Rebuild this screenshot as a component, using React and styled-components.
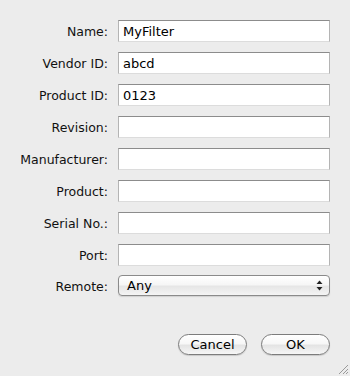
import React from "react";
import styled, { createGlobalStyle } from "styled-components";

const Global = createGlobalStyle`
  html, body { margin: 0; padding: 0; }
  body {
    background: #ececec;
    font-family: "Lucida Grande", "DejaVu Sans", sans-serif;
    font-size: 13px;
    color: #000;
  }
`;

const Window = styled.div`
  position: relative;
  width: 350px;
  height: 376px;
  box-sizing: border-box;
  background: #ececec;
  padding: 20px 20px 0 0;
`;

const Form = styled.div`
  display: grid;
  grid-template-columns: 108px 212px;
  column-gap: 10px;
  row-gap: 10px;
  align-items: center;
`;

const Label = styled.label`
  text-align: right;
  font-size: 12.5px;
  white-space: nowrap;
  color: #111;
`;

const Field = styled.div`
  height: 22px;
  box-sizing: border-box;
  background: #fff;
  border-top: 1px solid #8c8c8c;
  border-left: 1px solid #b4b4b4;
  border-right: 1px solid #b4b4b4;
  border-bottom: 1px solid #dcdcdc;
  padding: 2px 0 0 4px;
  font-size: 13px;
  line-height: 17px;
`;

const Select = styled.div`
  height: 21px;
  box-sizing: border-box;
  border: 1px solid #8a8a8a;
  border-radius: 4px;
  background: linear-gradient(#ffffff 0%, #f6f6f6 45%, #e6e6e6 55%, #f4f4f4 100%);
  box-shadow: 0 1px 1px rgba(0, 0, 0, 0.12);
  display: flex;
  align-items: center;
  justify-content: space-between;
  padding: 0 6px 0 8px;
  font-size: 13px;
  margin-top: -1px;
`;

const Buttons = styled.div`
  display: flex;
  justify-content: flex-end;
  gap: 14px;
  margin-top: 38px;
`;

const Button = styled.div`
  width: 69px;
  height: 21px;
  box-sizing: border-box;
  border: 1px solid #7c7c7c;
  border-radius: 11px;
  background: linear-gradient(#ffffff 0%, #f7f7f7 45%, #e4e4e4 55%, #f6f6f6 100%);
  box-shadow: 0 1px 1px rgba(0, 0, 0, 0.15);
  display: flex;
  align-items: center;
  justify-content: center;
  font-size: 13px;
`;

const Grip = styled.svg`
  position: absolute;
  right: 1px;
  bottom: 1px;
`;

const rows = [
  ["Name:", "MyFilter"],
  ["Vendor ID:", "abcd"],
  ["Product ID:", "0123"],
  ["Revision:", ""],
  ["Manufacturer:", ""],
  ["Product:", ""],
  ["Serial No.:", ""],
  ["Port:", ""],
];

export default function App() {
  return (
    <Window>
      <Global />
      <Form>
        {rows.map(([label, value]) => (
          <React.Fragment key={label}>
            <Label>{label}</Label>
            <Field>{value}</Field>
          </React.Fragment>
        ))}
        <Label>Remote:</Label>
        <Select>
          <span>Any</span>
          <svg width="7" height="11" viewBox="0 0 7 11">
            <path d="M3.5 0.5 L6.5 4 L0.5 4 Z" fill="#222" />
            <path d="M3.5 10.5 L6.5 7 L0.5 7 Z" fill="#222" />
          </svg>
        </Select>
      </Form>
      <Buttons>
        <Button>Cancel</Button>
        <Button>OK</Button>
      </Buttons>
      <Grip width="11" height="11" viewBox="0 0 11 11">
        <path d="M10 1 L1 10 M10 5 L5 10 M10 8 L8 10" stroke="#9a9a9a" strokeWidth="1" />
      </Grip>
    </Window>
  );
}
